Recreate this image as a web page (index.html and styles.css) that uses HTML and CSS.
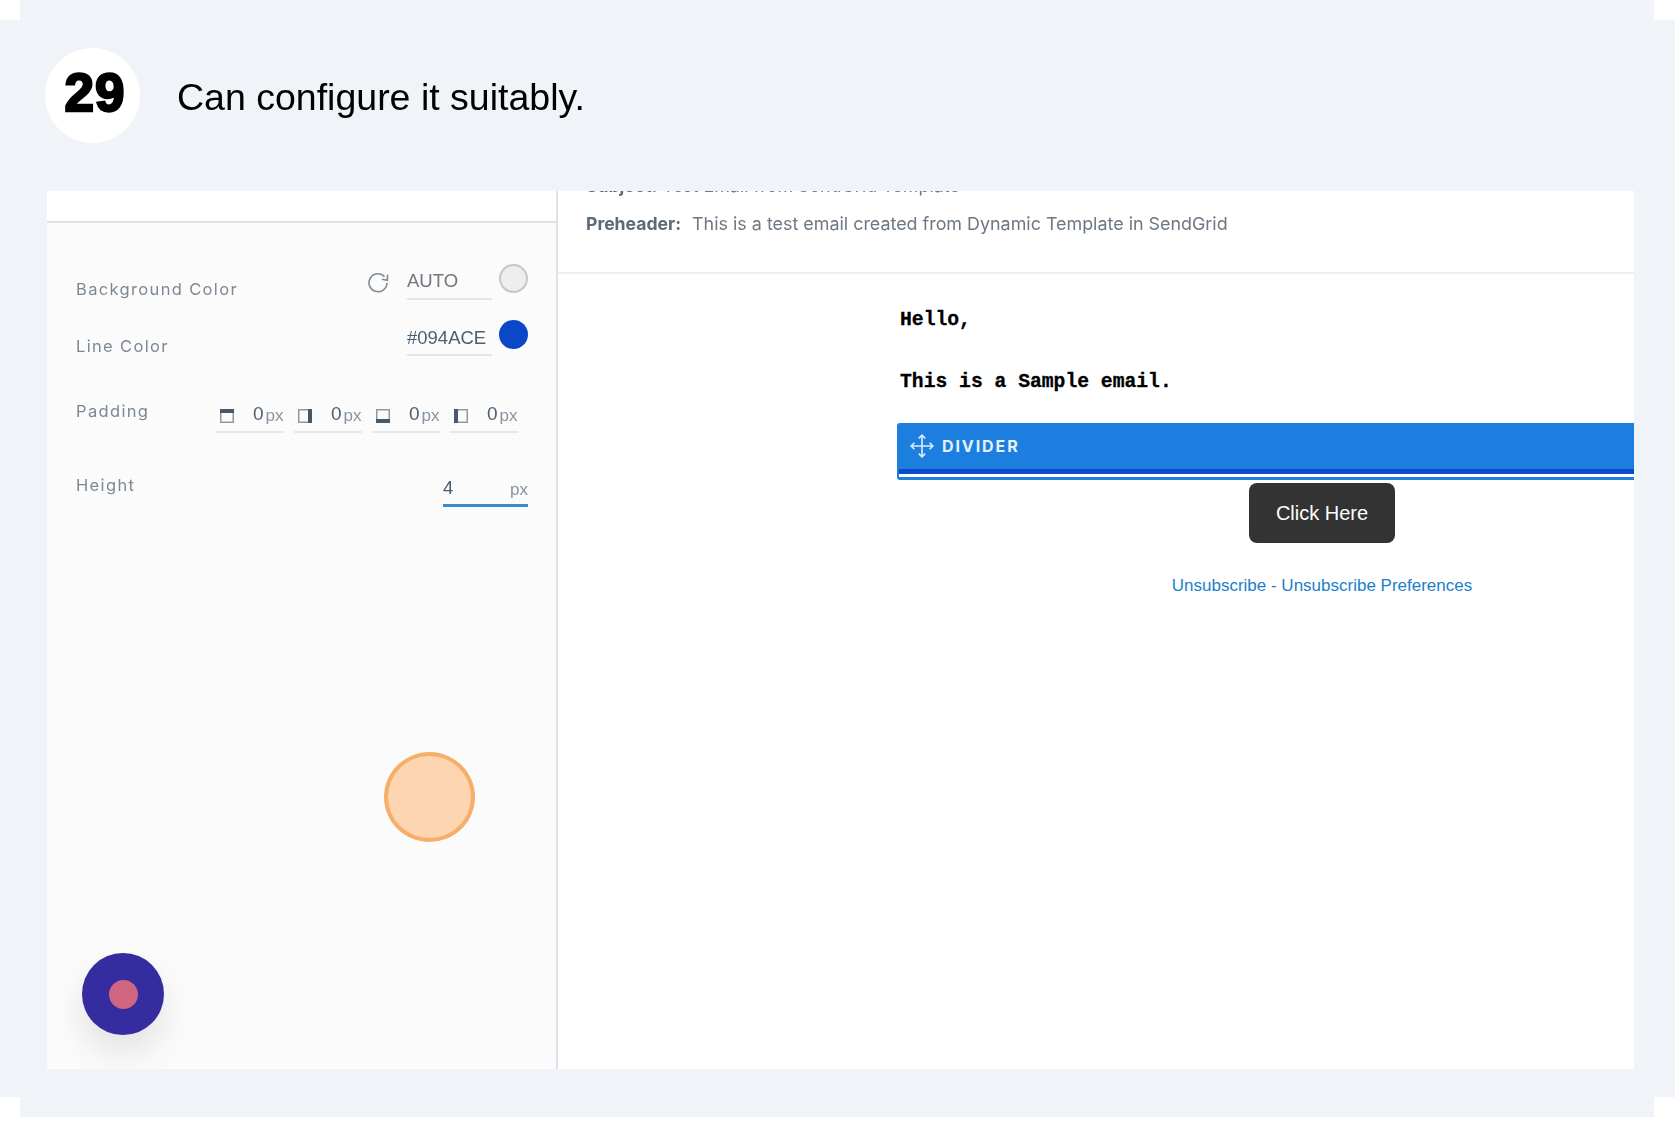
FILE: index.html
```html
<!DOCTYPE html>
<html lang="en">
<head>
<meta charset="utf-8">
<title>Step 29</title>
<link rel="stylesheet" href="styles.css">
</head>
<body>
<main class="page">
  <span class="corner corner-tl"></span>
  <span class="corner corner-tr"></span>
  <span class="corner corner-bl"></span>
  <span class="corner corner-br"></span>

  <header class="step">
    <div class="step-num">29</div>
    <h1 class="step-title">Can configure it suitably.</h1>
  </header>

  <section class="shot">
    <aside class="side">
      <div class="side-top"></div>
      <div class="form">
        <div class="row row-bg">
          <span class="label label-a">Background Color</span>
          <div class="controls">
            <svg class="refresh" viewBox="0 0 22 21" aria-hidden="true"><path d="M17.6 4.6A9 9 0 1 0 20 11" fill="none" stroke="#7f8a92" stroke-width="1.6"/><path d="M20.6 2.6 20.4 8.2 15 7.2" fill="none" stroke="#7f8a92" stroke-width="1.6"/></svg>
            <div class="field field-auto">AUTO</div>
            <span class="swatch swatch-auto"></span>
          </div>
        </div>
        <div class="row row-line">
          <span class="label label-b">Line Color</span>
          <div class="controls">
            <div class="field field-hex">#094ACE</div>
            <span class="swatch swatch-blue"></span>
          </div>
        </div>
        <div class="row row-padding">
          <span class="label label-c">Padding</span>
          <div class="pads">
            <div class="pad">
              <svg class="pad-icon" viewBox="0 0 14 14" aria-hidden="true"><rect x=".75" y=".75" width="12.5" height="12.5" fill="none" stroke="#8d99a3" stroke-width="1.5"/><rect width="14" height="4" fill="#48586a"/></svg>
              <span class="pad-val">0</span><span class="unit">px</span>
            </div>
            <div class="pad">
              <svg class="pad-icon" viewBox="0 0 14 14" aria-hidden="true"><rect x=".75" y=".75" width="12.5" height="12.5" fill="none" stroke="#8d99a3" stroke-width="1.5"/><rect x="10" width="4" height="14" fill="#48586a"/></svg>
              <span class="pad-val">0</span><span class="unit">px</span>
            </div>
            <div class="pad">
              <svg class="pad-icon" viewBox="0 0 14 14" aria-hidden="true"><rect x=".75" y=".75" width="12.5" height="12.5" fill="none" stroke="#8d99a3" stroke-width="1.5"/><rect y="10" width="14" height="4" fill="#48586a"/></svg>
              <span class="pad-val">0</span><span class="unit">px</span>
            </div>
            <div class="pad">
              <svg class="pad-icon" viewBox="0 0 14 14" aria-hidden="true"><rect x=".75" y=".75" width="12.5" height="12.5" fill="none" stroke="#8d99a3" stroke-width="1.5"/><rect width="4" height="14" fill="#48586a"/></svg>
              <span class="pad-val">0</span><span class="unit">px</span>
            </div>
          </div>
        </div>
        <div class="row row-height">
          <span class="label label-c">Height</span>
          <div class="height-field"><span class="height-val">4</span><span class="unit">px</span></div>
        </div>
      </div>
      <span class="highlight"></span>
      <span class="record"><span class="record-dot"></span></span>
    </aside>

    <div class="preview">
      <div class="meta">
        <p class="meta-line"><b>Subject:</b> Test Email from SendGrid Template</p>
        <p class="meta-line meta-pre"><b>Preheader:</b><span class="meta-text">This is a test email created from Dynamic Template in SendGrid</span></p>
      </div>
      <div class="email">
        <p class="mono mono-first">Hello,</p>
        <p class="mono mono-second">This is a Sample email.</p>
        <div class="divider">
          <div class="divider-bar">
            <svg class="move" viewBox="0 0 24 24" aria-hidden="true"><path d="M12 2v20M2 12h20M9 5l3-3 3 3M9 19l3 3 3-3M5 9l-3 3 3 3M19 9l3 3-3 3" fill="none" stroke="#dcebfb" stroke-width="1.5"/></svg>
            <span class="divider-name">DIVIDER</span>
          </div>
          <div class="divider-line"></div>
          <div class="divider-gap"></div>
        </div>
        <div class="cta"><a class="button">Click Here</a></div>
        <p class="links"><a>Unsubscribe</a> - <a>Unsubscribe Preferences</a></p>
      </div>
    </div>
  </section>
</main>
</body>
</html>
```

FILE: styles.css
```css
* { box-sizing: border-box; }
html, body { margin: 0; padding: 0; background: #fff; }
body { font-family: "Liberation Sans", Arial, sans-serif; }
p, h1 { margin: 0; }

.page {
  position: relative;
  width: 1675px;
  height: 1117px;
  background: #f0f3f8;
  overflow: hidden;
}
.corner { position: absolute; width: 21px; height: 20px; background: #fff; }
.corner-tl { left: 0; top: 0; width: 20px; }
.corner-tr { right: 0; top: 0; }
.corner-bl { left: 0; bottom: 0; width: 20px; }
.corner-br { right: 0; bottom: 0; }

/* step header */
.step {
  display: flex;
  align-items: center;
  height: 95px;
  margin: 48px 0 48px 45px;
}
.step-num {
  width: 95px;
  height: 95px;
  border-radius: 50%;
  background: #fff;
  display: flex;
  align-items: center;
  justify-content: center;
  padding: 0 0 6px 5px;
  font-size: 53px;
  font-weight: 700;
  letter-spacing: 1px;
  color: #000;
  -webkit-text-stroke: 2.4px #000;
}
.step-title {
  margin: 2px 0 0 37px;
  font-size: 37.5px;
  font-weight: 400;
  color: #000;
  line-height: 44px;
  white-space: nowrap;
  filter: blur(.4px);
}

/* screenshot */
.shot {
  display: flex;
  width: 1587px;
  height: 878px;
  margin-left: 47px;
  background: #fff;
  overflow: hidden;
}
.side {
  position: relative;
  flex: 0 0 511px;
  background: #fbfbfb;
  border-right: 2px solid #dfe3e9;
}
.side-top {
  height: 32px;
  background: #fff;
  border-bottom: 2px solid #dfe3e9;
}
.form { padding: 41px 28px 0 29px; filter: blur(.4px); }
.row { display: flex; justify-content: space-between; align-items: flex-start; }
.row-bg { height: 35px; }
.row-line { height: 36px; margin-top: 21px; }
.row-padding { height: 38px; margin-top: 39px; }
.row-height { height: 38px; margin-top: 36px; }

.label {
  font-family: Inter, "Noto Sans", sans-serif;
  font-size: 16.5px;
  line-height: 20px;
  letter-spacing: 1.35px;
  color: #7c8894;
}
.label-a { margin-top: 15px; }
.label-b { margin-top: 16px; }
.label-c { margin-top: 6px; }

.controls { display: flex; align-items: flex-start; }
.refresh { width: 22px; height: 21px; margin: 8px 18px 0 0; }
.field {
  width: 85px;
  height: 36px;
  padding-top: 7px;
  font-size: 18.5px;
  line-height: 20px;
  border-bottom: 2px solid #e3e5e8;
}
.field-auto { color: #71777d; }
.field-hex { padding-top: 8px; color: #4a5f72; }
.swatch { width: 29px; height: 29px; margin-left: 7px; border-radius: 50%; }
.swatch-auto { background: #eeeeee; border: 2px solid #c5c7c8; }
.swatch-blue { background: #0b47c8; }

.pads { display: flex; gap: 10px; margin-right: 10px; }
.pad {
  display: flex;
  align-items: flex-start;
  width: 68px;
  height: 38px;
  padding: 9px 0 0 4px;
  border-bottom: 2px solid #e7e8ea;
}
.pad-icon { width: 14px; height: 14px; margin: 5px 19px 0 0; }
.pad-val { font-size: 19px; line-height: 20px; color: #4e6072; }
.unit { margin: 2px 0 0 2px; font-size: 17px; line-height: 20px; color: #8a95a0; }
.height-field {
  display: flex;
  justify-content: space-between;
  width: 85px;
  height: 38px;
  padding-top: 9px;
  border-bottom: 3px solid #3a8bcb;
}
.height-val { font-size: 18.5px; line-height: 20px; color: #445a6e; }
.height-field .unit { margin: 2px 0 0 0; }

.highlight {
  position: absolute;
  left: 337px;
  top: 561px;
  width: 91px;
  height: 90px;
  border-radius: 50%;
  background: #fdd5b1;
  border: 4px solid #f6ae6b;
}
.record {
  position: absolute;
  left: 35px;
  top: 762px;
  width: 82px;
  height: 82px;
  border-radius: 50%;
  background: #352ca0;
  display: flex;
  align-items: center;
  justify-content: center;
  box-shadow: 0 18px 36px rgba(0, 0, 0, .1);
}
.record-dot { width: 29px; height: 29px; border-radius: 50%; background: #cf6580; }

/* preview */
.preview { flex: 1; min-width: 0; overflow: hidden; background: #fff; }
.meta {
  height: 106px;
  margin-top: -23px;
  padding-left: 28px;
  border-bottom: 2px solid #eceff2;
}
.meta-line {
  font-family: Inter, "Noto Sans", sans-serif;
  font-size: 17.9px;
  line-height: 36px;
  color: #6d7882;
  white-space: nowrap;
  filter: blur(.4px);
}
.meta-pre { margin-top: 2px; }
.meta-line b { font-size: 17.6px; color: #5a6b7a; font-weight: 700; }
.meta-text { margin-left: 11px; }

.email { width: 850px; margin-left: 339px; }
.mono {
  padding-left: 3px;
  font-family: "Liberation Mono", "Courier New", monospace;
  font-size: 19.7px;
  font-weight: 700;
  line-height: 24px;
  color: #000;
  -webkit-text-stroke: .3px #000;
}
.mono-first { margin-top: 34px; }
.mono-second { margin-top: 38px; }

.divider {
  margin-top: 29px;
  border: 2px solid #1c7fe0;
  border-bottom-width: 3px;
  border-right: 0;
  border-radius: 3px 0 0 3px;
}
.divider-bar {
  display: flex;
  align-items: center;
  height: 44px;
  padding: 0 0 2px 10px;
  background: #1c7fe0;
}
.move { width: 26px; height: 26px; }
.divider-name {
  margin-left: 7px;
  font-family: Inter, "Noto Sans", sans-serif;
  font-size: 16px;
  font-weight: 700;
  letter-spacing: 1.9px;
  color: #e4f0fc;
}
.divider-line { height: 5px; background: #0a4acb; }
.divider-gap { height: 3px; background: #fff; }

.cta { display: flex; justify-content: center; margin-top: 3px; }
.button {
  display: flex;
  align-items: center;
  justify-content: center;
  width: 146px;
  height: 60px;
  border-radius: 8px;
  background: #333;
  color: #fff;
  font-size: 20px;
}
.links {
  margin-top: 33px;
  text-align: center;
  font-size: 17px;
  line-height: 20px;
  color: #3a6f96;
}
.links a { color: #1c80c8; }
```
